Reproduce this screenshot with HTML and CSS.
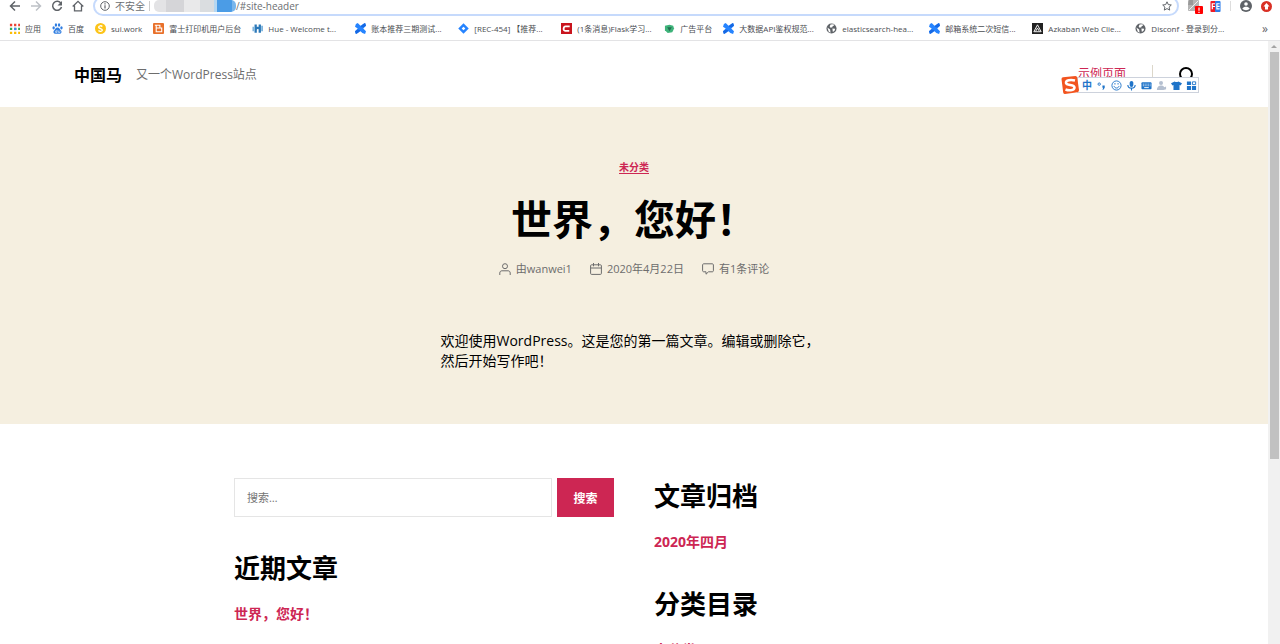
FILE: index.html
```
<!DOCTYPE html>
<html lang="zh-CN">
    <head>
        <meta charset="utf-8">
        <title>中国马</title>
        <link rel="stylesheet" href="styles.css">
    </head>
    <body>
        <svg class="sprite" aria-hidden="true">
            <symbol id="confluence" viewBox="0 0 12 12">
                <path fill="#2684ff" d="M1 1l2-1 3 3 3-2 2-1 1 3-3 3 3 3-1 3-3-1-2-2-3 2-2 1-1-3 3-3-3-2z"/>
                <path fill="#1668e3" d="M0 9l3-2 3 1-3 3-2 1zM12 3L9 5 6 4l3-3 2-1z"/>
            </symbol>
            <symbol id="globe" viewBox="0 0 12 12">
                <circle cx="6" cy="6" r="5.5" fill="#5f6368"/>
                <path fill="#fff" d="M1.5 5l3 2 .5 3.500-2-1zM5 1.500l3-.2 1 1.200-2 1.200v1l-2 .6-1-1.600zM7 6l3 .3-.5 2-2 1.500-.3-2z"/>
            </symbol>
        </svg>

        <div id="browser">
            <div id="toolbar">
                <button class="tool" aria-label="后退"><svg width="12" height="12" viewBox="0 0 12 12" fill="none" stroke="#5f6368" stroke-width="1.500"><path d="M11 6H2M6 1.500L1.500 6 6 10.500"/></svg></button>
                <button class="tool" aria-label="前进"><svg width="12" height="12" viewBox="0 0 12 12" fill="none" stroke="#bdc1c6" stroke-width="1.500"><path d="M1 6h9M6 1.500L10.500 6 6 10.500"/></svg></button>
                <button class="tool" aria-label="刷新"><svg width="12" height="12" viewBox="0 0 12 12" fill="none" stroke="#5f6368" stroke-width="1.500"><path d="M10 3.500A4.500 4.500 0 1 0 10.500 7"/><path fill="#5f6368" stroke="none" d="M11 1v4.500H6.500z"/></svg></button>
                <button class="tool" aria-label="主页"><svg width="12" height="12" viewBox="0 0 12 12" fill="none" stroke="#5f6368" stroke-width="1.300"><path d="M.7 6.500L6 1.300l5.300 5.200M2.500 5.500v5.300h7V5.500"/></svg></button>
                <div id="address">
                    <svg width="10" height="10" viewBox="0 0 10 10"><circle cx="5" cy="5" r="4.300" fill="none" stroke="#5f6368"/><path stroke="#5f6368" stroke-width="1.200" d="M5 4.300v3.200M5 2.300v1.200"/></svg>
                    <span class="insecure">不安全</span>
                    <span class="mask"></span>
                    <span class="url">/#site-header</span>
                    <button class="star" aria-label="收藏"><svg width="10" height="10" viewBox="0 0 10 10"><path fill="none" stroke="#5f6368" d="M5 .8l1.300 2.800 3 .4-2.200 2.100.6 3L5 7.600 2.300 9.100l.6-3L.7 4l3-.4z"/></svg></button>
                </div>
                <div id="extensions">
                    <svg width="16" height="16" viewBox="0 0 16 16"><rect x="1" y="2" width="11" height="11" rx="1" fill="#b5b5b5"/><path fill="#999" d="M1 7h5V2H2zM7 8h5v2H7z"/><path stroke="#eee" d="M2 12l9-9"/><rect x="8" y="8" width="8" height="8" rx="1" fill="#f00"/><path stroke="#fff" stroke-width="1.200" d="M12 9.500v3.200M12 13.700v1.200"/></svg>
                    <svg width="11" height="11" viewBox="0 0 11 12"><rect width="6" height="12" rx="1" fill="#f01b24"/><rect x="5" width="6" height="12" rx="1" fill="#2f7ee8"/><path stroke="#fff" stroke-width="1.300" fill="none" d="M5 3H2v6M2 6h3M10 3H7v5.500h3M7 5.800h3"/></svg>
                    <span class="line"></span>
                    <svg width="12" height="12" viewBox="0 0 12 12"><circle cx="6" cy="6" r="6" fill="#5f6368"/><circle cx="6" cy="4" r="1.800" fill="#fff"/><path fill="#fff" d="M2.300 8.500C4 6.200 8 6.200 9.700 8.500 8 10.800 4 10.800 2.300 8.500z"/></svg>
                    <svg width="11" height="11" viewBox="0 0 11 11"><circle cx="5.500" cy="5.500" r="5.500" fill="#d93025"/><path fill="#fff" d="M5.500 2l3 3.500H7V8.500H4V5.500H2.500z"/></svg>
                </div>
            </div>
            <nav id="bookmarks">
                <a href="#"><svg viewBox="0 0 12 12"><path stroke="#ea4335" stroke-width="2.500" stroke-dasharray="2.500 2" d="M1 2.200h11.500"/><path stroke="#34a853" stroke-width="2.500" stroke-dasharray="2.500 2" d="M1 6.500h11.500"/><path stroke="#fbbc05" stroke-width="2.500" stroke-dasharray="2.500 2" d="M1 10.800h11.500"/><path fill="#4285f4" d="M5.500 5.300H8v2.500H5.500z"/></svg><span>应用</span></a>
                <a href="#"><svg viewBox="0 0 12 12" fill="#2f7de1"><ellipse cx="1.800" cy="5.300" rx="1.300" ry="1.700"/><ellipse cx="4.300" cy="2.200" rx="1.300" ry="1.800"/><ellipse cx="7.700" cy="2.200" rx="1.300" ry="1.800"/><ellipse cx="10.300" cy="5.300" rx="1.300" ry="1.700"/><path d="M6 5c2 0 2.500 2 4 3.500 1 1.500 0 3.300-1.500 3.300H3.500C1.800 11.800 1 10 2 8.500 3.500 7 4 5 6 5z"/><path stroke="#fff" fill="none" stroke-width=".6" d="M5.500 7.500v2.800H4V8.700h1.500M7 8.300v2h1.700v-2"/></svg><span>百度</span></a>
                <a href="#"><svg viewBox="0 0 12 12"><circle cx="6" cy="6" r="6" fill="#fcc419"/><path fill="none" stroke="#fff" stroke-width="1.500" d="M8 3.700C7 2.700 4 2.800 4 4.500S8 6 8 7.700 5 9.500 3.800 8.300"/></svg><span>sui.work</span></a>
                <a href="#"><svg viewBox="0 0 12 12"><rect width="12" height="12" rx="1" fill="#e8702a"/><path fill="none" stroke="#fff" stroke-width="1.200" d="M2 2.500h5.500v3H3.500M3.500 2.500V9.500h6v-4h-6"/></svg><span>富士打印机用户后台</span></a>
                <a href="#" class="long"><svg viewBox="0 0 12 12"><path fill="none" stroke="#2b78b8" stroke-width="2.500" d="M4 1.500v9M4 7c1-2 3-2 4-1M8.500 1.500v9"/><path stroke="#7fb5dd" stroke-width="2" d="M1.500 4v5M11 3v6"/></svg><span>Hue - Welcome t...</span></a>
                <a href="#" class="long"><svg><use href="#confluence"/></svg><span>账本推荐三期测试...</span></a>
                <a href="#" class="long"><svg viewBox="0 0 12 12"><path fill="#2684ff" d="M6 .3L11.700 6 6 11.700.3 6z"/><path fill="#fff" d="M6 4l2 2-2 2-2-2z"/></svg><span>[REC-454] 【推荐...</span></a>
                <a href="#" class="long"><svg viewBox="0 0 12 12"><path fill="#c9151e" d="M0 0h12v12H0z"/><path fill="none" stroke="#fff" stroke-width="2" d="M9.500 3.700H5C2.500 3.700 2 8.500 4.500 8.500h4.500"/></svg><span>(1条消息)Flask学习...</span></a>
                <a href="#"><svg viewBox="0 0 12 12"><path fill="#3eb37a" d="M1 3l5-1 4 1 1 3-2 4-5 1-3-3z"/><path fill="#246b50" d="M3.500 4.500h5L6 9z"/></svg><span>广告平台</span></a>
                <a href="#" class="long"><svg><use href="#confluence"/></svg><span>大数据API鉴权规范...</span></a>
                <a href="#" class="long"><svg><use href="#globe"/></svg><span>elasticsearch-hea...</span></a>
                <a href="#" class="long"><svg><use href="#confluence"/></svg><span>邮箱系统二次短信...</span></a>
                <a href="#" class="long"><svg viewBox="0 0 12 12"><path fill="#222" d="M0 0h12v12H0z"/><path fill="none" stroke="#fff" d="M6 2l4 7.500H2zM6 5.500L4 9M6 5.500L8 9"/></svg><span>Azkaban Web Clie...</span></a>
                <a href="#" class="long"><svg><use href="#globe"/></svg><span>Disconf - 登录到分...</span></a>
                <button class="more">»</button>
            </nav>
        </div>

        <div id="viewport">
            <div id="page">
                <header id="site-header">
                    <a href="#" class="site-title">中国马</a>
                    <span class="tagline">又一个WordPress站点</span>
                    <nav class="menu"><a href="#">示例页面</a></nav>
                    <button class="search-toggle">
                        <svg width="16" height="16" viewBox="0 0 16 16" fill="none" stroke="#000" stroke-width="2"><circle cx="8" cy="7" r="6"/><path d="M12 11l3 4"/></svg>
                        <span>搜索</span>
                    </button>
                </header>

                <article>
                    <a href="#" class="category">未分类</a>
                    <h1>世界，您好！</h1>
                    <ul class="meta">
                        <li><svg width="12" height="12" viewBox="0 0 12 12"><circle cx="6" cy="3.200" r="2.500"/><path d="M.8 12V10c0-1.500 1-2.200 2.200-2.200h6c1.200 0 2.200.7 2.200 2.200v2"/></svg>由wanwei1</li>
                        <li><svg width="12" height="12" viewBox="0 0 12 12"><rect x=".6" y="1.800" width="10.800" height="9.600" rx="1"/><path d="M.6 5h10.800M3.500 0v3.300M8.500 0v3.300"/></svg>2020年4月22日</li>
                        <li><svg width="12" height="12" viewBox="0 0 12 12"><path d="M1.600.8h8.800c.5 0 1 .5 1 1v6c0 .5-.5 1-1 1H6.500L4 11.200V8.800H1.600c-.5 0-1-.5-1-1v-6c0-.5.5-1 1-1z"/></svg>有1条评论</li>
                    </ul>
                    <p>欢迎使用WordPress。这是您的第一篇文章。编辑或删除它，然后开始写作吧！</p>
                </article>

                <div id="widgets">
                    <div class="column">
                        <form class="search">
                            <input type="search" placeholder="搜索…" aria-label="搜索">
                            <button>搜索</button>
                        </form>
                        <section>
                            <h2>近期文章</h2>
                            <a href="#">世界，您好！</a>
                        </section>
                    </div>
                    <div class="column">
                        <section>
                            <h2>文章归档</h2>
                            <a href="#">2020年四月</a>
                        </section>
                        <section>
                            <h2>分类目录</h2>
                            <a href="#">未分类</a>
                        </section>
                    </div>
                </div>
            </div>
            <div id="scrollbar">
                <span class="arrow"></span>
                <span class="thumb"></span>
            </div>
        </div>

        <!-- input method bar floating over the page -->
        <div id="ime">
            <svg class="sogou" width="20" height="20" viewBox="0 0 20 20"><path fill="#f2541f" d="M1.500 4Q1.500 2.500 3 2.200L15.500 1Q17 1 17.200 2.500L19 15Q19 17 17.500 17.300L5 19Q3.500 19 3.200 17.500z"/><path fill="none" stroke="#fff" stroke-width="2.500" d="M15 5.500C11 4.500 5.500 5 6 8s8.500 1 8.500 4.500S8 15.500 5.500 14.500"/></svg>
            <div class="keys">
                <span>中</span>
                <svg viewBox="0 0 12 12"><circle cx="3.500" cy="4.500" r="1.300" fill="none" stroke="#1f74c9"/><path fill="#1f74c9" d="M7 6h2.500v2.500L8 10.500H7l.8-2H7z"/></svg>
                <svg viewBox="0 0 12 12" fill="none" stroke="#1f74c9"><circle cx="6" cy="6" r="5"/><path d="M3.300 6.500c.5 3 5 3 5.400 0M4.300 3.300v1.700M7.700 3.300v1.700"/></svg>
                <svg viewBox="0 0 12 12"><rect x="4" y="1" width="4" height="6.500" rx="2" fill="#1f74c9"/><path fill="none" stroke="#1f74c9" stroke-width="1.200" d="M2 5.500c0 4.500 8 4.500 8 0M6 9v2.500"/></svg>
                <svg viewBox="0 0 12 12"><rect x=".5" y="2.500" width="11" height="7.500" rx="1" fill="#1f74c9"/><path stroke="#fff" stroke-dasharray="1 1" d="M2 4.500h8.500M2 6.300h8.500"/><path stroke="#fff" d="M3.500 8.300h5"/></svg>
                <svg viewBox="0 0 12 12" fill="#b4bfd0"><circle cx="5.500" cy="3.200" r="2.200"/><path d="M1 11c0-6 7-6 8-3l2-1v3l-3 1z"/></svg>
                <svg viewBox="0 0 12 12" fill="#1f74c9"><path d="M4 1.500Q6 3 8 1.500L12 3.500 10.500 6 9.300 5.500V11H2.700V5.500L1.500 6 0 3.500z"/></svg>
                <svg viewBox="0 0 12 12" fill="#1f74c9"><path d="M1 1.500h4.500v4H1zM1 6.500h4.500v4.500H1zM6.500 6.500H11V11H6.500z"/><path fill="none" stroke="#1f74c9" d="M7 2h3.500v3H7z"/></svg>
            </div>
        </div>
    </body>
</html>
```
FILE: styles.css
```
*{
    box-sizing: border-box;
}
body{
    margin: 0;
    height: 100vh;
    display: flex;
    flex-direction: column;
    overflow: hidden;
    background-color: white;
    color: black;
    font-family: "Open Sans", "Noto Sans CJK SC", sans-serif;
}
button{
    border: 0;
    padding: 0;
    background: none;
    font-family: inherit;
}
.sprite{
    display: none;
}

/* browser */
#browser{
    border-bottom: 1px solid #e3e3e5;
}
#toolbar{
    display: flex;
    align-items: flex-end;
    height: 16px;
    padding: 0 8px 0 9px;
    overflow: hidden;
}
.tool{
    display: flex;
    align-items: center;
    height: 20px;
    width: 12px;
    margin-right: 9px;
}
#address{
    flex: 1;
    display: flex;
    align-items: center;
    height: 20px;
    padding: 0 5px;
    border: 2px solid #c6dafc;
    border-radius: 10px;
    color: #6b6e72;
    font-size: 10px;
    line-height: 14px;
}
.insecure{
    margin-left: 5px;
    padding-right: 4px;
    border-right: 1px solid #ccc;
    line-height: 10px;
}
.mask{
    width: 82px;
    height: 12px;
    margin-left: 4px;
    border-radius: 5px;
    background: linear-gradient(90deg, #e3e3e5 0 12px, #d5d5d8 12px 30px, #e9e9ea 30px 46px, #dadde0 46px 60px, #b5d7f2 60px 63px, #4b9ce6 63px 78px, #79b6ec 78px);
}
.star{
    display: flex;
    margin-left: auto;
}
#extensions{
    display: flex;
    align-items: center;
    height: 20px;
    margin-left: 8px;
    gap: 7px;
}
#extensions .line{
    width: 1px;
    height: 10px;
    margin: 0 2px;
    background-color: #ddd;
}
#extensions svg:last-child{
    margin-left: 2px;
}
#bookmarks{
    display: flex;
    align-items: center;
    height: 24px;
    padding: 0 12px 0 9px;
    gap: 11px;
}
#bookmarks a{
    display: flex;
    align-items: center;
    gap: 5px;
    color: #4a4d51;
    font-size: 8px;
    text-decoration: none;
    white-space: nowrap;
}
#bookmarks .long{
    flex: 0 1 92px;
    min-width: 0;
}
#bookmarks svg{
    flex: none;
    width: 11px;
    height: 11px;
}
#bookmarks .more{
    margin-left: auto;
    color: #5f6368;
    font-size: 12px;
}

/* page */
#viewport{
    flex: 1;
    min-height: 0;
    display: flex;
}
#page{
    flex: 1;
    overflow: hidden;
}
#site-header{
    display: flex;
    align-items: center;
    height: 66px;
    padding: 0 74px;
}
.site-title{
    color: black;
    font-size: 16px;
    font-weight: bold;
    text-decoration: none;
}
.tagline{
    margin-left: 14px;
    color: #6d6d6d;
    font-size: 12px;
}
.menu{
    margin-left: auto;
    padding-right: 26px;
    border-right: 1px solid #dcd7ca;
    line-height: 18px;
    font-size: 12px;
}
.menu a{
    color: #cd2653;
}
.search-toggle{
    display: flex;
    flex-direction: column;
    align-items: center;
    margin-left: 25px;
    padding-top: 14px;
    font-size: 8px;
    line-height: 12px;
}
article{
    display: flex;
    flex-direction: column;
    align-items: center;
    height: 317px;
    padding-top: 54px;
    background-color: #f5efe0;
}
.category{
    border-bottom: 1px solid #cd2653;
    color: #cd2653;
    font-size: 10px;
    font-weight: bold;
    line-height: 12px;
    text-decoration: none;
}
h1{
    margin: 19px 0 0;
    font-size: 41px;
    line-height: 52px;
}
.meta{
    display: flex;
    gap: 18px;
    margin: 16px 0 0;
    padding: 0;
    list-style: none;
    color: #6d6d6d;
    font-size: 11px;
    line-height: 16px;
}
.meta li{
    display: flex;
    align-items: center;
    gap: 5px;
}
.meta svg{
    fill: none;
    stroke: #6d6d6d;
}
article p{
    width: 387px;
    margin: 54px 0 0;
    font-size: 14px;
    line-height: 20px;
}

#widgets{
    display: grid;
    grid-template-columns: 1fr 1fr;
    gap: 40px;
    max-width: 800px;
    margin: 0 auto;
    padding-top: 54px;
}
.column{
    display: flex;
    flex-direction: column;
    gap: 33px;
}
.search{
    display: flex;
    gap: 5px;
}
.search input{
    flex: 1;
    min-width: 0;
    height: 39px;
    padding: 0 12px;
    border: 1px solid #e5e5e5;
    font-family: inherit;
    font-size: 11px;
}
.search button{
    width: 57px;
    background-color: #cd2653;
    color: white;
    font-size: 12px;
    font-weight: bold;
}
h2{
    margin: 0 0 17px;
    font-size: 26px;
    line-height: 36px;
}
section a{
    display: block;
    color: #cd2653;
    font-size: 14px;
    font-weight: bold;
    line-height: 22px;
    text-decoration: none;
}

#scrollbar{
    display: flex;
    flex-direction: column;
    align-items: center;
    width: 12px;
    background-color: #f1f1f1;
}
.arrow{
    margin: 4px 0;
    border: 3px solid transparent;
    border-top: 0;
    border-bottom-color: #a3a3a3;
}
.thumb{
    width: 9px;
    height: 67.5%;
    background-color: #c1c1c1;
}

/* input method */
#ime{
    position: absolute;
    top: 75px;
    right: 81px;
    display: flex;
    align-items: center;
}
.sogou{
    z-index: 1;
}
.keys{
    display: flex;
    align-items: center;
    gap: 4px;
    height: 16px;
    margin-left: -3px;
    padding: 0 1px 0 4px;
    border: 1px solid #cdd2dc;
    background-color: white;
    color: #1f74c9;
    font-size: 10px;
    font-weight: bold;
    line-height: 14px;
}
.keys svg{
    width: 11px;
    height: 11px;
}
```
